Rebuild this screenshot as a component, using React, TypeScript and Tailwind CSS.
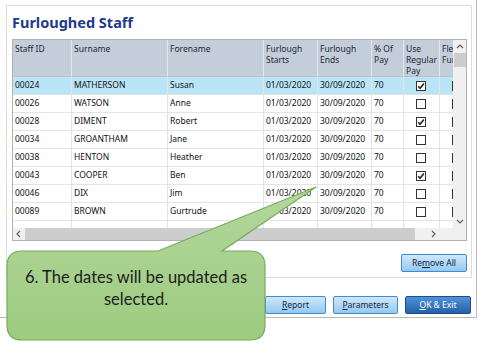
import React from 'react';

type Row = { id: string; surname: string; forename: string; regular: boolean };

const rows: Row[] = [
    { id: '00024', surname: 'MATHERSON', forename: 'Susan', regular: true },
    { id: '00026', surname: 'WATSON', forename: 'Anne', regular: false },
    { id: '00028', surname: 'DIMENT', forename: 'Robert', regular: true },
    { id: '00034', surname: 'GROANTHAM', forename: 'Jane', regular: false },
    { id: '00038', surname: 'HENTON', forename: 'Heather', regular: false },
    { id: '00043', surname: 'COOPER', forename: 'Ben', regular: true },
    { id: '00046', surname: 'DIX', forename: 'Jim', regular: false },
    { id: '00089', surname: 'BROWN', forename: 'Gurtrude', regular: false },
];

const cols = 'grid grid-cols-[59px_96px_96px_54px_54px_32px_36px_40px]';

const CheckBox = ({ checked }: { checked: boolean }) => (
    <svg width="10" height="10" viewBox="0 0 10 10" className="block shrink-0">
        <rect x="0.5" y="0.5" width="9" height="9" fill="white" stroke="#333" strokeWidth="1" />
        {checked && <path d="M2.2 5.2 L4.1 7.2 L7.9 2.6" fill="none" stroke="#222" strokeWidth="1.6" />}
    </svg>
);

const Cell = ({ children, last }: { children?: React.ReactNode; last?: boolean }) => (
    <div className={`h-[18px] flex items-center pl-[2px] border-b border-[#e4e4e4] whitespace-nowrap overflow-hidden ${last ? '' : 'border-r'}`}>
        {children}
    </div>
);

const Chevron = ({ dir }: { dir: 'up' | 'down' | 'left' | 'right' }) => {
    const d = {
        up: 'M1 5 L4 2 L7 5',
        down: 'M1 2 L4 5 L7 2',
        left: 'M5 1 L2 4 L5 7',
        right: 'M2 1 L5 4 L2 7',
    }[dir];
    return (
        <svg width="8" height="8" viewBox="0 0 8 8">
            <path d={d} fill="none" stroke="#606060" strokeWidth="1.2" />
        </svg>
    );
};

const LightButton = ({ children, w }: { children: React.ReactNode; w: string }) => (
    <button className={`${w} h-[18px] rounded-[2px] border border-[#3f8ad2] bg-gradient-to-b from-[#cfe8fb] to-[#93c9f2] text-[#14243a] text-[8.5px] leading-none flex items-center justify-center`}>
        {children}
    </button>
);

const App: React.FC = () => {
    return (
        <div className="relative w-[485px] h-[346px] bg-white overflow-hidden font-['Noto_Sans',sans-serif] text-[#111]">
            <div className="w-[477px] h-[318px] border-r border-b border-[#b9b9b9] flex flex-col">
                {/* group panel */}
                <div className="ml-[6px] mt-[5px] w-[466px] h-[273px] border border-[#dcdcdc] pl-[5px] flex flex-col">
                    <div className="h-[33px] pt-[7px]">
                        <h1 className="text-[14.5px] leading-[18px] font-bold text-[#1d3a8a]">Furloughed Staff</h1>
                    </div>

                    {/* grid */}
                    <div className="w-[455px] h-[202px] border border-[#b3b3b3] flex flex-col text-[8.5px]">
                        <div className="flex h-[188px]">
                            <div className="flex-1 overflow-hidden">
                                <div className={`${cols} h-[37px] bg-[#c4cedb] text-[#1c2733] leading-[11px]`}>
                                    {['Staff ID', 'Surname', 'Forename', 'Furlough Starts', 'Furlough Ends', '% Of Pay', 'Use Regular Pay', 'Flexi Furlough'].map((h, i) => (
                                        <div key={h} className={`pl-[2px] pt-[3px] pr-[3px] border-r border-[#e2e7ed] border-b border-b-[#b8c2cd] ${i === 7 ? 'whitespace-nowrap' : ''}`}>
                                            {i === 7 ? (<>Flexi<br />Furlough</>) : h}
                                        </div>
                                    ))}
                                </div>
                                {rows.map((r, i) => (
                                    <div key={r.id} className={`${cols} ${i === 0 ? 'bg-[#b9e5f6]' : 'bg-white'}`}>
                                        <Cell>{r.id}</Cell>
                                        <Cell>{r.surname}</Cell>
                                        <Cell>{r.forename}</Cell>
                                        <Cell>01/03/2020</Cell>
                                        <Cell>30/09/2020</Cell>
                                        <Cell>70</Cell>
                                        <Cell><div className="w-full flex justify-center pr-[3px]"><CheckBox checked={r.regular} /></div></Cell>
                                        <Cell last><div className="pl-[10px]"><CheckBox checked={r.regular} /></div></Cell>
                                    </div>
                                ))}
                                <div className={`${cols} bg-white`}>
                                    <Cell /><Cell /><Cell /><Cell /><Cell /><Cell /><Cell /><Cell last />
                                </div>
                            </div>
                            {/* vertical scrollbar */}
                            <div className="w-[13px] bg-[#f0f0f0] flex flex-col items-center">
                                <div className="h-[13px] flex items-center justify-center"><Chevron dir="up" /></div>
                                <div className="w-[12px] h-[14px] bg-[#cdcdcd]" />
                                <div className="flex-1" />
                                <div className="h-[13px] flex items-center justify-center"><Chevron dir="down" /></div>
                            </div>
                        </div>
                        {/* horizontal scrollbar */}
                        <div className="flex h-[12px] bg-[#f0f0f0]">
                            <div className="w-[12px] flex items-center justify-center"><Chevron dir="left" /></div>
                            <div className="w-[390px] bg-[#cdcdcd]" />
                            <div className="flex-1 flex items-center justify-center"><Chevron dir="right" /></div>
                            <div className="w-[13px] bg-[#f0f0f0]" />
                        </div>
                    </div>

                    <div className="w-[455px] mt-[13px] flex justify-end">
                        <LightButton w="w-[66px]">Re<u>m</u>ove All</LightButton>
                    </div>
                </div>

                {/* footer buttons */}
                <div className="mt-[18px] pr-[5px] flex justify-end gap-[7px]">
                    <LightButton w="w-[61px]"><u>R</u>eport</LightButton>
                    <LightButton w="w-[65px]"><u>P</u>arameters</LightButton>
                    <button className="w-[66px] h-[18px] rounded-[2px] border border-[#1f4d8c] bg-gradient-to-b from-[#4f93da] to-[#2560a8] text-white text-[8.5px] leading-none flex items-center justify-center">
                        <u>O</u>K &amp; Exit
                    </button>
                </div>
            </div>

            {/* callout */}
            <svg className="absolute left-0 top-0 pointer-events-none" width="485" height="346" viewBox="0 0 485 346">
                <defs>
                    <linearGradient id="cg" x1="0" y1="0" x2="0" y2="1">
                        <stop offset="0" stopColor="#b3d79d" />
                        <stop offset="1" stopColor="#9dcb80" />
                    </linearGradient>
                </defs>
                <path
                    d="M22 251 L158 251 L316 187 L222 251 L250 251 Q265 251 265 266 L265 325 Q265 340 250 340 L22 340 Q7 340 7 325 L7 266 Q7 251 22 251 Z"
                    fill="url(#cg)"
                    stroke="#7aab5b"
                    strokeWidth="1.2"
                />
            </svg>
            <div className="absolute left-[7px] top-[251px] w-[258px] h-[89px] pt-[15px] text-center font-['Lato',sans-serif] text-[16.5px] leading-[22px] text-[#1c1c1c]">
                6. The dates will be updated as
                <br />
                selected.
            </div>
        </div>
    );
};

export default App;
